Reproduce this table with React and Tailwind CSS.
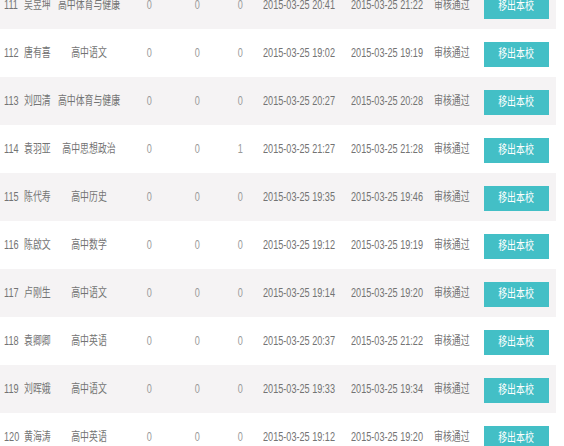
import React from 'react'

const rows = [
  ['111', '吴昱坤', '高中体育与健康', '0', '0', '0', '2015-03-25 20:41', '2015-03-25 21:22'],
  ['112', '唐有喜', '高中语文', '0', '0', '0', '2015-03-25 19:02', '2015-03-25 19:19'],
  ['113', '刘四清', '高中体育与健康', '0', '0', '0', '2015-03-25 20:27', '2015-03-25 20:28'],
  ['114', '袁羽亚', '高中思想政治', '0', '0', '1', '2015-03-25 21:27', '2015-03-25 21:28'],
  ['115', '陈代寿', '高中历史', '0', '0', '0', '2015-03-25 19:35', '2015-03-25 19:46'],
  ['116', '陈啟文', '高中数学', '0', '0', '0', '2015-03-25 19:12', '2015-03-25 19:19'],
  ['117', '卢刚生', '高中语文', '0', '0', '0', '2015-03-25 19:14', '2015-03-25 19:20'],
  ['118', '袁卿卿', '高中英语', '0', '0', '0', '2015-03-25 20:37', '2015-03-25 21:22'],
  ['119', '刘晖娥', '高中语文', '0', '0', '0', '2015-03-25 19:33', '2015-03-25 19:34'],
  ['120', '黄海涛', '高中英语', '0', '0', '0', '2015-03-25 19:12', '2015-03-25 19:20'],
]

// the source renders its text squeezed sideways
const Num = ({ children, center }) => (
  <span className={`inline-block whitespace-nowrap scale-x-[0.76] ${center ? 'origin-center' : 'origin-left'}`}>
    {children}
  </span>
)
const Han = ({ children, center }) => (
  <span className={`inline-block whitespace-nowrap scale-x-[0.74] ${center ? 'origin-center' : 'origin-left'}`}>
    {children}
  </span>
)

function Row({ r, striped }) {
  const [id, name, subject, a, b, c, d1, d2] = r
  return (
    <div className={`flex items-center h-[48px] w-[556px] ${striped ? 'bg-[#f5f3f4]' : 'bg-white'}`}>
      <div className="w-[24px] pl-[4px]"><Num>{id}</Num></div>
      <div className="w-[32px]"><Han>{name}</Han></div>
      <div className="w-[66px] flex justify-center"><Han center>{subject}</Han></div>
      <div className="w-[54px] flex justify-center text-[#999]"><Num center>{a}</Num></div>
      <div className="w-[42px] flex justify-center text-[#999]"><Num center>{b}</Num></div>
      <div className="w-[44px] flex justify-center text-[#999]"><Num center>{c}</Num></div>
      <div className="w-[87px] pl-[1px]"><Num>{d1}</Num></div>
      <div className="w-[83px] pl-[2px]"><Num>{d2}</Num></div>
      <div className="w-[52px] pl-[2px]"><Han>审核通过</Han></div>
      <button className="w-[65px] h-[25px] mt-[2px] bg-[#43bfc6] text-white flex items-center justify-center">
        <Han center>移出本校</Han>
      </button>
    </div>
  )
}

export default function App() {
  return (
    <div className="w-[564px] h-[446px] overflow-hidden bg-white">
      <div className="-mt-[19px] text-[12px] text-[#737373] font-['Liberation_Sans','Noto_Sans_CJK_SC',sans-serif]">
        {rows.map((r, i) => (
          <Row key={r[0]} r={r} striped={i % 2 === 0} />
        ))}
      </div>
    </div>
  )
}
